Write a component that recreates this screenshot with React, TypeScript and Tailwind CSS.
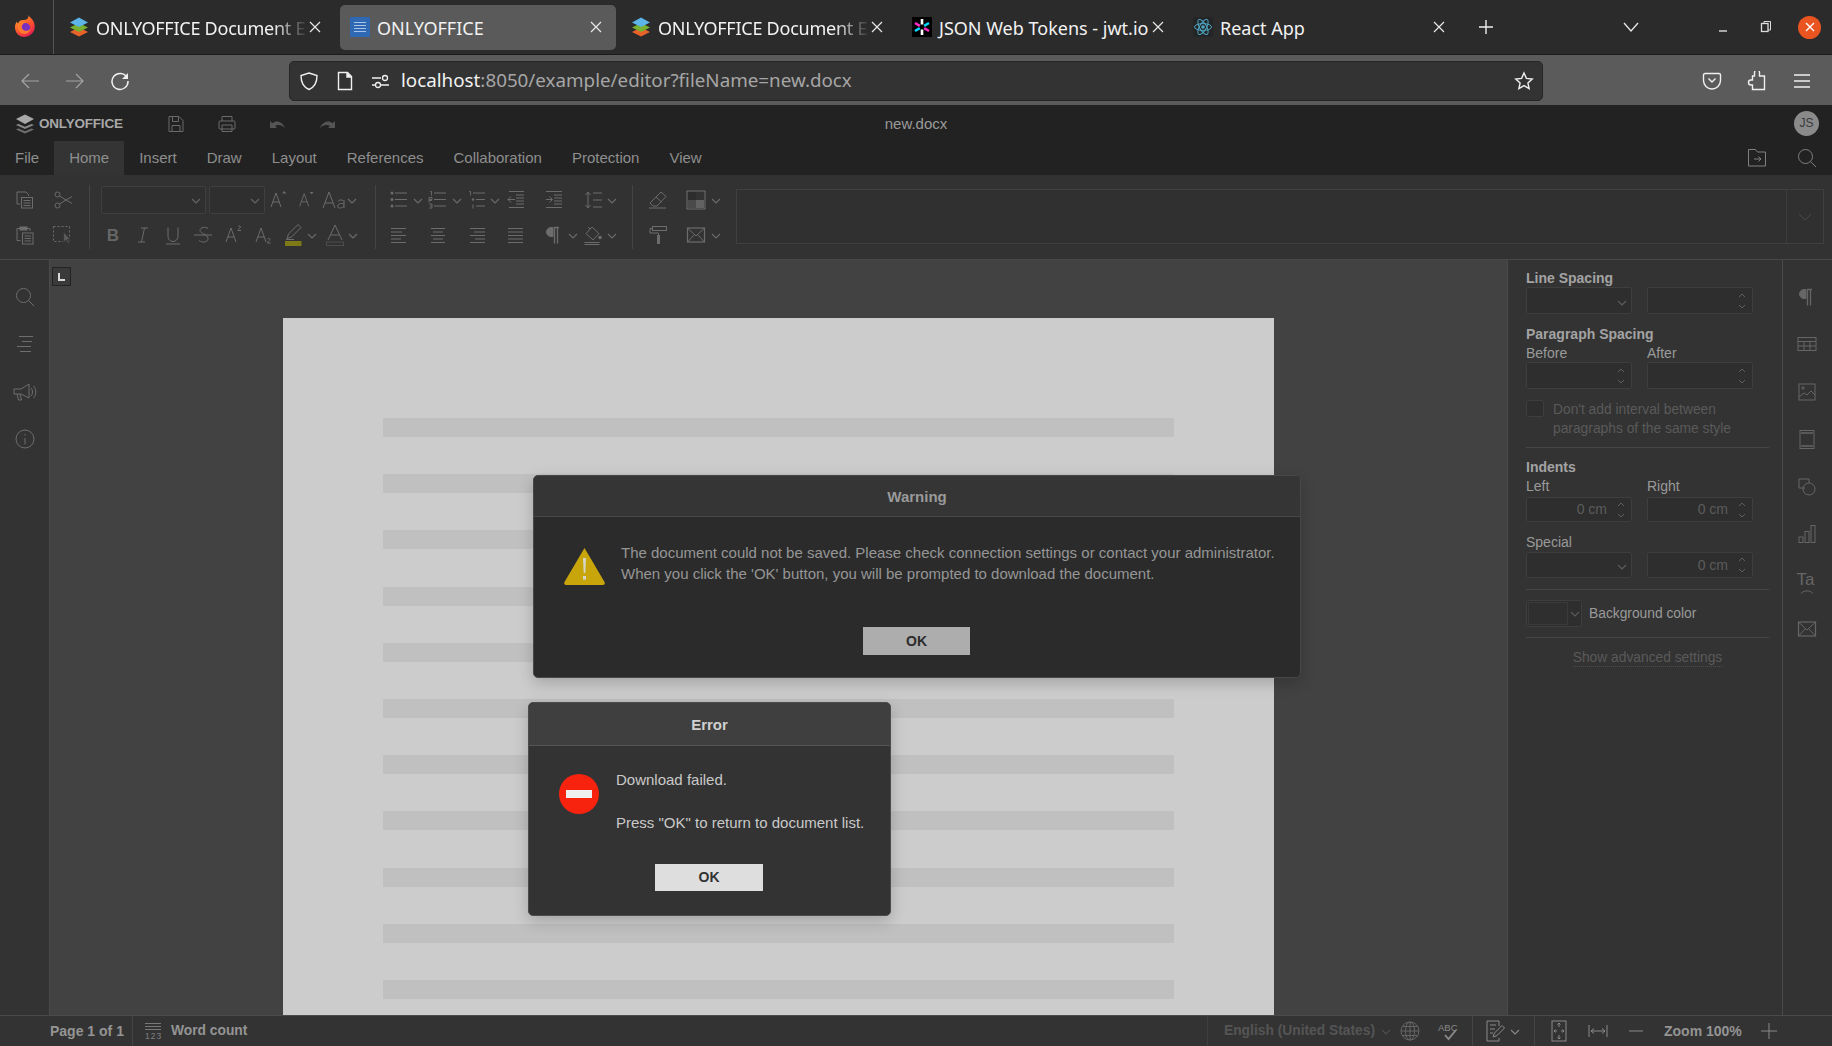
import React from "react";

type IP = { w?: number; h?: number; vb?: string; className?: string; sw?: number; children?: React.ReactNode };
const Ic = ({ w = 20, h = 20, vb, className = "", sw = 1, children }: IP) => (
  <svg width={w} height={h} viewBox={vb ?? `0 0 ${w} ${h}`} fill="none" stroke="currentColor" strokeWidth={sw} className={`block shrink-0 ${className}`}>
    {children}
  </svg>
);
const Chev = ({ className = "" }: { className?: string }) => (
  <div className={`flex w-[10px] shrink-0 justify-center pt-[1px] ${className}`}>
    <svg width="10" height="6" viewBox="0 0 10 6" fill="none" stroke="currentColor" strokeWidth="1.1" className="block"><path d="M1 1l4 4 4-4" /></svg>
  </div>
);
const Stack = ({ size = 20 }: { size?: number }) => (
  <svg width={size} height={size} viewBox="0 0 20 20" className="block shrink-0">
    <path d="M10 10.500L1 15l9 4.500 9-4.500z" fill="#e8632a" />
    <path d="M10 6L1 10.500l9 4.500 9-4.500z" fill="#78b02f" />
    <path d="M10 .5L1 5.500l9 4.500 9-4.500z" fill="#5cb4e8" />
  </svg>
);
const Firefox = () => (
  <svg width="22" height="24" viewBox="0 0 22 24" className="block">
    <defs>
      <linearGradient id="ff" x1="0" y1="0" x2="0.6" y2="1"><stop offset="0" stopColor="#ffb52e" /><stop offset="0.55" stopColor="#ff5a2c" /><stop offset="1" stopColor="#e8214f" /></linearGradient>
    </defs>
    <path d="M14.500 1c.8 2.500 3.800 3.400 5.300 7 1.600 4 1.200 7.600-1 10.600-2.100 2.800-5 4.400-8.300 4.400C5 23 1 18.500 1 13.500c0-2.700.8-4.600 1.900-6 .2 1 .6 1.700 1.200 2.200C5 6.800 7 5.800 9.500 6c2.500-.2 5.500-1 5-5z" fill="url(#ff)" />
    <circle cx="11" cy="14" r="5.200" fill="#7a2fc0" />
    <path d="M3.500 10c2-2.500 6-3.200 9-1.500-2.500.2-4.500 1.800-4.700 4-.2 2.500 2 4.500 4.700 4.300 2-.2 3.300-1.300 4-2.800-.3 3.800-3 6-6 6-3.800 0-7-3.500-7-7 0-1 0-2 0-3z" fill="#ff7a2c" />
  </svg>
);
const DocFav = () => (
  <svg width="20" height="20" viewBox="0 0 20 20" className="block shrink-0">
    <rect width="20" height="20" fill="#2f68b3" rx="1" />
    <path d="M4 5.500h12M4 8.500h12M4 11.500h12M4 14.500h12" stroke="#a9c4e8" strokeWidth="1.200" />
  </svg>
);
const JwtFav = () => (
  <svg width="20" height="20" viewBox="0 0 20 20" className="block shrink-0">
    <rect width="20" height="20" fill="#000" />
    <g strokeWidth="2.600">
      <path d="M10 7.500V2M10 12.500V18" stroke="#fff" />
      <path d="M12.200 8.800L17 6M7.800 11.200L3 14" stroke="#00d8ff" />
      <path d="M12.200 11.200L17 14M7.800 8.800L3 6" stroke="#ff2bc4" />
    </g>
  </svg>
);
const ReactFav = () => (
  <svg width="20" height="20" viewBox="0 0 20 20" className="block shrink-0">
    <rect width="20" height="20" fill="#232526" rx="2" />
    <g fill="none" stroke="#4ea8c4" strokeWidth="1">
      <ellipse cx="10" cy="10" rx="8.500" ry="3.400" />
      <ellipse cx="10" cy="10" rx="8.500" ry="3.400" transform="rotate(60 10 10)" />
      <ellipse cx="10" cy="10" rx="8.500" ry="3.400" transform="rotate(120 10 10)" />
    </g>
    <circle cx="10" cy="10" r="1.800" fill="#4ea8c4" />
  </svg>
);
const X = ({ className = "" }: { className?: string }) => (
  <svg width="16" height="16" viewBox="0 0 16 16" fill="none" stroke="currentColor" strokeWidth="1.200" className={`block shrink-0 ${className}`}><path d="M3 3l10 10M13 3L3 13" /></svg>
);

const Tab = ({ icon, title, active, fade }: { icon: React.ReactNode; title: string; active?: boolean; fade?: boolean }) => (
  <div className={`flex h-[45px] w-[276px] shrink-0 items-center rounded-[5px] pl-[10px] pr-[12px] ${active ? "bg-[#5a5a5a]" : ""}`}>
    {icon}
    <div className={`ml-[7px] min-w-0 flex-1 whitespace-nowrap pt-[3px] ${fade ? "tracking-[-0.25px] [mask-image:linear-gradient(90deg,#000_84%,rgba(0,0,0,0.15)_98%)]" : ""}`}>{title}</div>
    <X className="text-[#e8e8e8]" />
  </div>
);

const Combo = ({ className = "" }: { className?: string }) => (
  <div className={`flex items-center justify-end rounded-[2px] border border-[#3f3f3f] bg-[#2f2f2f] text-[#666666] ${className}`}>
    <Chev className="mr-[4px] mt-[1px]" />
  </div>
);
const Sep = () => <div className="mt-[10px] h-[64px] w-px shrink-0 bg-[#444444]" />;
const Row = ({ children }: { children: React.ReactNode }) => <div className="flex h-[24px] items-center">{children}</div>;

const Copy = () => <Ic><path d="M5 14H2V2h9l2.500 2.500V6" /><rect x="6.500" y="7.500" width="11" height="10.500" /><path d="M8.500 10.500h7M8.500 13h7M8.500 15.500h7" /></Ic>;
const Paste = () => <Ic><path d="M5.500 15.500H2V3.500h3M12 3.500h3V6" /><rect x="5" y="2" width="7" height="3" fill="currentColor" /><rect x="7.500" y="8" width="10.500" height="11" /><path d="M9.500 11h6.500M9.500 13.500h6.500M9.500 16h6.500" /></Ic>;
const Cut = () => <Ic><circle cx="4.500" cy="4.500" r="2.500" /><circle cx="4.500" cy="15.500" r="2.500" /><path d="M6.500 6L19 13.500M6.500 14L19 6.500" /></Ic>;
const SelectAll = () => <Ic><rect x="1.500" y="1.500" width="16" height="15" strokeDasharray="2 2" /><path d="M11.500 7l0 10 2.500-2 2 4 1.500-.8-2-3.700h3z" fill="#5a5a5a" stroke="#333333" strokeWidth="0.800" /></Ic>;
const BigA = ({ children }: { children?: React.ReactNode }) => <Ic><path d="M3 17L8 3l5 14M4.800 12h6.400" />{children}</Ic>;

const Bullets = () => <Ic><circle cx="3" cy="3" r="1.500" fill="currentColor" stroke="none" /><circle cx="3" cy="9.500" r="1.500" fill="currentColor" stroke="none" /><circle cx="3" cy="16" r="1.500" fill="currentColor" stroke="none" /><path d="M6 3h12M6 9.500h12M6 16h12" /></Ic>;
const Numbers = () => <Ic><path d="M6 3h12M6 9.500h12M6 16h12" /><path d="M2 1.500h1.500v4M1 12.500V7.500h3v2H1.500v1H4M1 14h3v4H1M2 16h2" strokeWidth="0.900" /></Ic>;
const Multi = () => <Ic><path d="M6 3h12M9 9.500h9M9 16h9" /><path d="M2 1.500h1.500v4" strokeWidth="0.900" /><circle cx="6" cy="9.500" r="1.200" fill="currentColor" stroke="none" /><path d="M6 14.500v4" /></Ic>;
const Outdent = () => <Ic><path d="M3 1.500h15M10 5h8M10 8h8M10 11h8M10 14h8M3 17.500h15M2 9.500h7M5 6.500l-3 3 3 3" /></Ic>;
const Indent = () => <Ic><path d="M2 1.500h16M10 5h8M10 8h8M10 11h8M10 14h8M2 17.500h16M2 9.500h6M5.500 6.500l3 3-3 3" /></Ic>;
const LineSp = () => <Ic><path d="M4 2v16M1.500 5L4 2l2.500 3M1.500 15L4 18l2.500-3M9 3h9M9 10h9M9 17h9" /></Ic>;
const AL = () => <Ic><path d="M2 3.500h15M2 7h11M2 10.500h15M2 14h10M2 17.500h15" /></Ic>;
const AC = () => <Ic><path d="M3 3.500h14M5 7h10M3 10.500h14M5 14h10M3 17.500h14" /></Ic>;
const AR = () => <Ic><path d="M3 3.500h15M7 7h11M3 10.500h15M8 14h10M3 17.500h15" /></Ic>;
const AJ = () => <Ic><path d="M2 3.500h15M2 7h15M2 10.500h15M2 14h15M2 17.500h15" /></Ic>;
const Pilcrow = () => <Ic><path d="M9 2.500H7a4.500 4.500 0 000 9h2z" fill="currentColor" /><path d="M10 2.500h5M10.500 2.500v16M13.500 2.500v16" strokeWidth="1.300" /></Ic>;
const Fill = () => <Ic><path d="M9 2l7 6.500-6 6.500-7-6.500zM7 4L5 2" /><circle cx="17" cy="12.500" r="1.800" fill="currentColor" stroke="none" /><path d="M1.500 17.500h15M1.500 19.500h15" /></Ic>;
const Eraser = () => <Ic><path d="M13 2l5 4.500-9 9.500H5L2 13z M8 7l5.500 5M1 18h17" /></Ic>;
const Scheme = () => <svg width="20" height="20" viewBox="0 0 20 20" className="block shrink-0"><rect x="1" y="1" width="18" height="18" fill="none" stroke="#6e6e6e" /><rect x="2" y="2" width="8" height="8" fill="#2d2d2d" /><rect x="10" y="2" width="8" height="8" fill="#333333" /><rect x="2" y="10" width="8" height="8" fill="#4a4a4a" /><rect x="10" y="10" width="8" height="8" fill="#626262" /></svg>;
const Paint = () => <Ic><rect x="4.500" y="1.500" width="14" height="4" /><path d="M4.500 3.500H2v4.500h8.500v2.500" /><rect x="9" y="10" width="3" height="9" fill="currentColor" stroke="none" /></Ic>;
const Mail = () => <Ic><rect x="1.500" y="3" width="17" height="14" strokeWidth="1.200" /><path d="M2 3.500l8 7.500 8-7.500M2 16.500l6.500-7M18 16.500l-6.500-7" /></Ic>;
const Save = () => <Ic><path d="M3 2.500h10l4 4v11H3z" /><path d="M6.500 2.500v5h6v-5M6 17.500v-6h8v6" /></Ic>;
const Print = () => <Ic><rect x="2" y="7" width="16" height="8" rx="1" /><path d="M5 7V2.500h10V7M5 11h10v6.500H5z" /></Ic>;
const Undo = () => <svg width="20" height="20" viewBox="0 0 20 20" className="block shrink-0"><path d="M3 14V7l2.300 2.300C9.500 5.800 15.500 7.500 18 14c-3-3.300-7.500-4-10-2l2 2z" fill="currentColor" /></svg>;
const Redo = () => <svg width="20" height="20" viewBox="0 0 20 20" className="block shrink-0"><path d="M17 14V7l-2.300 2.300C10.500 5.800 4.500 7.500 2 14c3-3.300 7.500-4 10-2l-2 2z" fill="currentColor" /></svg>;
const Search = () => <Ic><circle cx="8.500" cy="8.500" r="7" /><path d="M13.500 13.500l5.500 5.500" /></Ic>;

const Spin = () => (
  <div className="mr-[5px] flex w-[10px] shrink-0 flex-col items-center gap-[6px]">
    <svg width="10" height="6" viewBox="0 0 10 6" fill="none" stroke="currentColor" className="block"><path d="M2 5l3-3 3 3" /></svg>
    <svg width="10" height="6" viewBox="0 0 10 6" fill="none" stroke="currentColor" className="block"><path d="M2 1l3 3 3-3" /></svg>
  </div>
);
const Field = ({ value, h, w = "w-[106px]" }: { value?: string; h: string; w?: string }) => (
  <div className={`flex items-center justify-end rounded-[2px] border border-[#3e3e3e] bg-[#2e2e2e] text-[#5f5f5f] ${h} ${w}`}>
    {value && <span className="mr-[9px] text-[14px] text-[#5c5c5c]">{value}</span>}
    <Spin />
  </div>
);
const PCombo = ({ h }: { h: string }) => (
  <div className={`flex w-[106px] items-center justify-end rounded-[2px] border border-[#3e3e3e] bg-[#2e2e2e] text-[#5f5f5f] ${h}`}>
    <Chev className="mr-[4px] mt-[3px]" />
  </div>
);
const Label = ({ children, bold, className = "" }: { children: React.ReactNode; bold?: boolean; className?: string }) => (
  <div className={`h-[18px] text-[14px] leading-[18px] ${bold ? "font-bold text-[#a3a3a3]" : "text-[#9a9a9a]"} ${className}`}>{children}</div>
);
const Divider = ({ className = "" }: { className?: string }) => <div className={`h-px w-[243px] bg-[#464646] ${className}`} />;

const LINES = Array.from({ length: 11 });

export default function App() {
  return (
    <div className="relative flex h-[1046px] w-[1832px] flex-col overflow-hidden bg-[#333333] font-['Liberation_Sans',Arial,sans-serif]">
      {/* Browser tab strip */}
      <div className="flex h-[55px] shrink-0 items-center border-b border-[#1b1b1b] bg-[#2b2b2b] font-['Noto_Sans',sans-serif] text-[18px] text-[#f2f2f2]">
        <div className="flex h-full w-[54px] shrink-0 items-center justify-center border-r border-[#555555] pb-[2px] pr-[4px]"><Firefox /></div>
        <div className="ml-[5px] flex gap-[5px]">
          <Tab icon={<Stack />} title="ONLYOFFICE Document E" fade />
          <Tab icon={<DocFav />} title="ONLYOFFICE" active />
          <Tab icon={<Stack />} title="ONLYOFFICE Document E" fade />
          <Tab icon={<JwtFav />} title="JSON Web Tokens - jwt.io" />
          <Tab icon={<ReactFav />} title="React App" />
        </div>
        <Ic w={16} h={16} sw={1.400} className="ml-[19px] text-[#eeeeee]"><path d="M8 1v14M1 8h14" /></Ic>
        <Ic w={16} h={16} sw={1.300} className="ml-[129px] text-[#e8e8e8]"><path d="M1 4l7 8 7-8" /></Ic>
        <Ic w={16} h={16} sw={1.400} className="ml-[76px] text-[#dddddd]"><path d="M4 12h8" /></Ic>
        <Ic w={16} h={16} className="ml-[27px] text-[#dddddd]"><path d="M6 4V2.500h6.500V11H10" /><rect x="3.500" y="4.500" width="6.500" height="8" fill="#2b2b2b" strokeWidth="1.300" /></Ic>
        <div className="ml-[24px] flex h-[23px] w-[23px] shrink-0 items-center justify-center rounded-full bg-[#e95420] text-white">
          <svg width="12" height="12" viewBox="0 0 12 12" fill="none" stroke="currentColor" strokeWidth="1.400" className="block"><path d="M2 2l8 8M10 2l-8 8" /></svg>
        </div>
      </div>

      {/* Browser nav bar */}
      <div className="flex h-[50px] shrink-0 items-center bg-[#5b5b5b] pt-[1px]">
        <Ic sw={1.200} className="ml-[20px] text-[#a4a4a4]"><path d="M19 10H2M9 3l-7 7 7 7" /></Ic>
        <Ic sw={1.200} className="ml-[25px] text-[#a4a4a4]"><path d="M1 10h17M11 3l7 7-7 7" /></Ic>
        <Ic sw={1.500} className="ml-[25px] text-[#f0f0f0]"><path d="M17 6.500A8 8 0 1018 10" /><path d="M18 2v6h-6z" fill="currentColor" stroke="none" /></Ic>
        <div className="ml-[159px] flex h-[40px] w-[1254px] shrink-0 items-center rounded-[5px] border border-[#262626] bg-[#333333] pl-[9px] pr-[8px] text-[#f0f0f0]">
          <Ic sw={1.400}><path d="M10 2l8 2.500c0 7-2 11.500-8 14-6-2.500-8-7-8-14z" /></Ic>
          <Ic sw={1.400} className="ml-[16px]"><path d="M3.500 1.500h9l4 4v13h-13z" /><path d="M12 1.500v4.500h4.500" fill="currentColor" /></Ic>
          <Ic sw={1.300} className="ml-[15px]"><path d="M2 7h9M2 14h4M11 14h8" /><circle cx="15" cy="7" r="2.500" /><circle cx="8" cy="14" r="2.500" /></Ic>
          <div className="ml-[11px] whitespace-nowrap font-['Noto_Sans',sans-serif] text-[18.800px]"><span className="text-[#f2f2f2]">localhost</span><span className="text-[#a6a6a6]">:8050/example/editor?fileName=new.docx</span></div>
          <Ic sw={1.400} className="ml-auto"><path d="M10 2l2.400 5.400 5.800.6-4.300 3.900 1.200 5.700-5.100-3-5.100 3 1.200-5.700L1.800 8l5.800-.6z" /></Ic>
        </div>
        <Ic sw={1.400} className="ml-[159px] text-[#f0f0f0]"><path d="M3 2.500h14A1.500 1.500 0 0118.500 4v5.500a8.500 8.500 0 01-17 0V4A1.500 1.500 0 013 2.500z" /><path d="M6.500 7.500L10 11l3.500-3.500" /></Ic>
        <Ic sw={1.400} className="ml-[25px] text-[#f0f0f0]"><path d="M7.500 1.500a2.500 2.500 0 015 0V5h5v13.500h-12V14H4a2.500 2.500 0 010-5h1.500V5h2z" /></Ic>
        <Ic sw={1.500} className="ml-[25px] text-[#f0f0f0]"><path d="M2 4h16M2 10h16M2 16h16" /></Ic>
      </div>

      {/* Editor header */}
      <div className="flex h-[70px] shrink-0 flex-col bg-[#222222]">
        <div className="grid h-[36px] grid-cols-[1fr_auto_1fr] items-center">
          <div className="flex items-center pl-[15px] pt-[2px] text-[#6a6a6a]">
            <svg width="20" height="20" viewBox="0 0 20 20" className="block shrink-0">
              <path d="M10 11.500L1 15.500l9 4 9-4-2.500-1L10 17.200 3.500 14.500z" fill="#6f6f6f" />
              <path d="M10 7L1 11l9 4 9-4-2.500-1L10 12.800 3.500 10z" fill="#8a8a8a" />
              <path d="M10 .5L1 5l9 5 9-5z" fill="#a9a9a9" />
            </svg>
            <span className="ml-[4px] w-[83px] whitespace-nowrap text-[13.500px] font-bold tracking-[-0.2px] text-[#a8a8a8]">ONLYOFFICE</span>
            <div className="ml-[44px]"><Save /></div>
            <div className="ml-[31px]"><Print /></div>
            <div className="ml-[30px] text-[#555555]"><Undo /></div>
            <div className="ml-[31px] text-[#555555]"><Redo /></div>
          </div>
          <div className="pt-[2px] text-[15px] text-[#9a9a9a]">new.docx</div>
          <div className="flex justify-end pr-[13px]">
            <div className="flex h-[25px] w-[25px] items-center justify-center rounded-full bg-[#8a8a8a] text-[12px] text-[#3a3a3a]">JS</div>
          </div>
        </div>
        <div className="flex h-[34px] items-stretch text-[15px] text-[#8e8e8e]">
          {["File", "Home", "Insert", "Draw", "Layout", "References", "Collaboration", "Protection", "View"].map((m) => (
            <div key={m} className={`flex items-center px-[15px] ${m === "Home" ? "bg-[#343434]" : ""}`}>{m}</div>
          ))}
          <div className="ml-auto flex items-center pr-[15px] text-[#808080]">
            <Ic><path d="M1.500 1.500h7l2 2.500h8v14h-17z" /><path d="M7 11h7M11.500 8.500L14 11l-2.500 2.500" /></Ic>
            <div className="ml-[30px]"><Search /></div>
          </div>
        </div>
      </div>

      {/* Toolbar */}
      <div className="flex h-[85px] shrink-0 items-start border-b border-[#484848] bg-[#323232] text-[#6c6c6c]">
        <div className="flex w-[89px] shrink-0 flex-col gap-[11px] pt-[13px]">
          <Row><div className="ml-[15px]"><Copy /></div><div className="ml-[18px]"><Cut /></div></Row>
          <Row><div className="ml-[15px]"><Paste /></div><div className="ml-[17px]"><SelectAll /></div></Row>
        </div>
        <Sep />
        <div className="flex w-[285px] shrink-0 flex-col gap-[11px] pt-[13px]">
          <Row>
            <Combo className="ml-[11px] h-[28px] w-[105px]" />
            <Combo className="ml-[3px] h-[28px] w-[56px]" />
            <div className="ml-[3px]"><BigA><path d="M14 3.500l2.200-2.500 2.200 2.500z" fill="currentColor" stroke="none" /></BigA></div>
            <div className="ml-[8px] scale-90"><BigA><path d="M14 1l2.200 2.500L18.400 1z" fill="currentColor" stroke="none" /></BigA></div>
            <div className="ml-[6px]"><Ic w={24} h={20}><path d="M1 18L7 2l6 16M3 13h8" /><path d="M21.500 11c-1-1.500-5-1.500-5.500.5M22 10v8M22 14c-2-.8-6-.8-6.300 2 0 3 5 2.500 6.300 0" /></Ic></div>
            <Chev className="ml-[1px]" />
          </Row>
          <Row>
            <div className="ml-[13px] flex w-[20px] justify-center text-[17px] font-bold leading-none text-[#666666]">B</div>
            <div className="ml-[10px]"><Ic><path d="M8 3h7M5 17h7M11.500 3L8.500 17" /></Ic></div>
            <div className="ml-[10px]"><Ic><path d="M5 2.500v9a5 5 0 0010 0v-9M3 19h14" /></Ic></div>
            <div className="ml-[10px]"><Ic><path d="M15 3.500C13 1.500 7 2 7 5.500c0 3 8 4 8 8 0 4-6 4.500-9 2M1 10h18" /></Ic></div>
            <div className="ml-[10px]"><BigA><path d="M15 1.500c1-1 2.500-.5 2.500.5 0 1-2.500 2-2.500 3.500h3" /></BigA></div>
            <div className="ml-[10px]"><BigA><path d="M14.500 14c1-1 2.500-.5 2.500.5s-2.500 2-2.500 3.500h3" /></BigA></div>
            <div className="ml-[10px]"><Ic h={24} vb="0 0 20 24"><path d="M15 1.500l3 3L8.500 14l-4.500 1.500 1.500-4.500zM3 16.500h8" /><rect x="2" y="18" width="16.500" height="5" fill="#7f7a18" stroke="none" /></Ic></div>
            <Chev className="ml-[4px]" />
            <div className="ml-[8px]"><Ic h={24} vb="0 0 20 24"><path d="M3 17L10 2l7 15M5.500 12h9" /><rect x="1.500" y="19" width="17" height="3.500" stroke="#4c4c4c" /></Ic></div>
            <Chev className="ml-[3px]" />
          </Row>
        </div>
        <Sep />
        <div className="flex w-[256px] shrink-0 flex-col gap-[11px] pt-[13px]">
          <Row>
            <div className="ml-[13px]"><Bullets /></div><Chev className="ml-[4px]" />
            <div className="ml-[5px]"><Numbers /></div><Chev className="ml-[4px]" />
            <div className="ml-[5px]"><Multi /></div><Chev className="ml-[3px]" />
            <div className="ml-[6px]"><Outdent /></div>
            <div className="ml-[18px]"><Indent /></div>
            <div className="ml-[20px]"><LineSp /></div><Chev className="ml-[3px]" />
          </Row>
          <Row>
            <div className="ml-[13px]"><AL /></div>
            <div className="ml-[19px]"><AC /></div>
            <div className="ml-[19px]"><AR /></div>
            <div className="ml-[19px]"><AJ /></div>
            <div className="ml-[18px]"><Pilcrow /></div><Chev className="ml-[4px]" />
            <div className="ml-[5px]"><Fill /></div><Chev className="ml-[4px]" />
          </Row>
        </div>
        <Sep />
        <div className="flex w-[103px] shrink-0 flex-col gap-[11px] pt-[13px]">
          <Row><div className="ml-[15px]"><Eraser /></div><div className="ml-[18px]"><Scheme /></div><Chev className="ml-[5px]" /></Row>
          <Row><div className="ml-[15px]"><Paint /></div><div className="ml-[18px]"><Mail /></div><Chev className="ml-[5px]" /></Row>
        </div>
        <div className="mt-[14px] flex h-[55px] w-[1088px] shrink-0 justify-end border border-[#404040] bg-[#303030]">
          <div className="flex w-[37px] items-center justify-center border-l border-[#3c3c3c] text-[#484848]"><svg width="14" height="8" viewBox="0 0 14 8" fill="none" stroke="currentColor" className="block"><path d="M1 1l6 6 6-6" /></svg></div>
        </div>
      </div>

      {/* Workspace */}
      <div className="flex min-h-0 flex-1">
        <div className="flex w-[50px] shrink-0 flex-col items-center gap-[27.400px] border-r border-[#4a4a4a] bg-[#333333] pt-[27px] text-[#6e6e6e]">
          <Search />
          <Ic><path d="M4 2.500h14M7 7.500h10M2 12.500h14M5 17.500h11" /></Ic>
          <Ic w={24} h={20}><path d="M1 7h7l8-5v14l-8-4H1zM4 12l1.500 6h3L7 12M18 6c2 2 2 6 0 8M20.500 4c3 3 3 9 0 12" /></Ic>
          <Ic><circle cx="10" cy="10" r="9" /><path d="M10 5v1.500M10 9v6.500" /></Ic>
        </div>
        <div className="relative min-w-0 flex-1 overflow-hidden bg-[#424242]">
          <div className="absolute left-[2px] top-[7px] flex h-[19px] w-[19px] items-center justify-center border border-[#232323] bg-[#3a3a3a]">
            <svg width="9" height="9" viewBox="0 0 9 9" className="block"><path d="M1 1h2v6h5v2H1z" fill="#d8d8d8" /></svg>
          </div>
          <div className="ml-[233px] mt-[58px] flex h-[900px] w-[991px] flex-col gap-[37.200px] bg-[#cccccc] pl-[100px] pt-[100px]">
            {LINES.map((_, i) => <div key={i} className="h-[19px] w-[791px] shrink-0 bg-[#c0c0c0]" />)}
          </div>
        </div>

        {/* Right settings panel */}
        <div className="w-[275px] shrink-0 border-l border-[#4a4a4a] bg-[#333333] pl-[18px] pt-[9px]">
          <Label bold>Line Spacing</Label>
          <div className="flex gap-[15px]"><PCombo h="h-[27px]" /><Field h="h-[27px]" /></div>
          <Label bold className="mt-[11px]">Paragraph Spacing</Label>
          <div className="mt-[1px] flex gap-[15px]"><Label className="w-[106px]">Before</Label><Label>After</Label></div>
          <div className="flex gap-[15px]"><Field h="h-[27px]" /><Field h="h-[27px]" /></div>
          <div className="mt-[11px] flex h-[38px]">
            <div className="h-[17px] w-[18px] rounded-[2px] border border-[#3e3e3e] bg-[#2e2e2e]" />
            <div className="ml-[9px] text-[13.800px] leading-[19px] text-[#5a5a5a]">Don't add interval between<br />paragraphs of the same style</div>
          </div>
          <Divider className="mt-[9px]" />
          <Label bold className="mt-[10px]">Indents</Label>
          <div className="mt-[1px] flex gap-[15px]"><Label className="w-[106px]">Left</Label><Label>Right</Label></div>
          <div className="mt-[2px] flex gap-[15px]"><Field h="h-[25px]" value="0 cm" /><Field h="h-[25px]" value="0 cm" /></div>
          <Label className="mt-[11px]">Special</Label>
          <div className="mt-[1px] flex gap-[15px]"><PCombo h="h-[26px]" /><Field h="h-[26px]" value="0 cm" /></div>
          <Divider className="mt-[11px]" />
          <div className="mt-[10px] flex h-[27px] items-center">
            <div className="flex h-[27px] w-[56px] items-center rounded-[2px] border border-[#3e3e3e] bg-[#2e2e2e] pl-[1px] text-[#5a5a5a]">
              <div className="h-[23px] w-[40px] border border-[#3a3a3a] bg-[#2f2f2f]" />
              <Chev className="ml-[2px]" />
            </div>
            <div className="ml-[7px] pt-[2px] text-[13.800px] text-[#9a9a9a]">Background color</div>
          </div>
          <Divider className="mt-[10px]" />
          <div className="mt-[11px] flex w-[243px] justify-center">
            <span className="h-[18px] border-b border-dotted border-[#4c4c4c] text-[13.800px] leading-[18px] text-[#5a5a5a]">Show advanced settings</span>
          </div>
        </div>

        {/* Right rail */}
        <div className="flex w-[50px] shrink-0 flex-col items-center gap-[27.400px] border-l border-[#4a4a4a] bg-[#333333] pr-[2px] pt-[27px] text-[#666666]">
          <Pilcrow />
          <Ic><rect x="1" y="3.500" width="18" height="13" /><path d="M1 7.500h18M1 12h18M7 7.500v9M13 7.500v9" /></Ic>
          <Ic><rect x="2" y="2" width="16" height="16" /><circle cx="6" cy="6" r="1.200" /><path d="M2 15l5-4 3 2 4-4 4 4" /></Ic>
          <Ic><rect x="3" y="1.500" width="14" height="18" /><path d="M4 4h12M4 17h12" strokeWidth="1.500" /></Ic>
          <Ic><path d="M8 11H2V2h10v4" /><circle cx="12" cy="12" r="6" /></Ic>
          <Ic><rect x="2" y="13" width="4" height="5.500" /><rect x="8" y="7.500" width="4" height="11" /><rect x="14" y="1.500" width="4" height="17" /></Ic>
          <div className="relative h-[20px] w-[20px] text-[17px] leading-[17px] text-[#666666]">Ta
            <svg width="14" height="5" viewBox="0 0 14 5" fill="none" stroke="currentColor" className="absolute left-[3px] top-[18px] block"><path d="M1 4.500C4 1 10 1 13 4.500" /></svg>
          </div>
          <Mail />
        </div>
      </div>

      {/* Status bar */}
      <div className="flex h-[31px] shrink-0 items-center border-t border-[#4a4a4a] bg-[#333333] text-[14px] font-bold text-[#949494]">
        <span className="ml-[50px] w-[82px] whitespace-nowrap">Page 1 of 1</span>
        <div className="h-full w-px bg-[#454545]" />
        <svg width="16" height="18" viewBox="0 0 16 18" fill="none" stroke="currentColor" className="ml-[12px] block overflow-visible text-[#808080]">
          <path d="M0 1.500h16M0 4.500h16M0 7.500h16" strokeWidth="0.900" />
          <text x="0" y="16.500" fontSize="8.500" stroke="none" fill="currentColor" fontWeight="400" letterSpacing="1">123</text>
        </svg>
        <span className="ml-[10px] text-[13.800px]">Word count</span>
        <div className="ml-auto flex h-full items-center pr-[55px] text-[#6e6e6e]">
          <div className="h-full w-px bg-[#3e3e3e]" />
          <span className="ml-[16px] whitespace-nowrap text-[13.800px] text-[#555555]">English (United States)</span>
          <Chev className="ml-[6px] text-[#505050]" />
          <div className="ml-[9px] text-[#666666]"><Ic><circle cx="10" cy="10" r="9" /><ellipse cx="10" cy="10" rx="4.500" ry="9" /><path d="M1 10h18M2.500 5.500h15M2.500 14.500h15M10 1v18" /></Ic></div>
          <div className="ml-[18px] flex w-[20px] flex-col items-center text-[#8a8a8a]">
            <svg width="20" height="18" viewBox="0 0 20 18" fill="none" stroke="currentColor" className="block overflow-visible">
              <text x="0" y="9" fontSize="9.500" stroke="none" fill="currentColor" fontWeight="400">ABC</text>
              <path d="M7 13l3.500 4L18 8" strokeWidth="1.800" />
            </svg>
          </div>
          <div className="ml-[14px] h-full w-px bg-[#454545]" />
          <div className="ml-[13px] text-[#8a8a8a]"><Ic h={22} vb="0 0 20 22"><path d="M13 6V1H1v20h12v-3" /><path d="M4 5h6M4 9h5M4 13h3M7 17l1.500-4L16 5.500l2.500 2.500L11 15.500z" /></Ic></div>
          <Chev className="ml-[4px] text-[#8a8a8a]" />
          <div className="ml-[14px] h-full w-px bg-[#454545]" />
          <div className="ml-[16px] text-[#8a8a8a]"><Ic w={16} h={22}><rect x="1" y="1" width="14" height="20" /><path d="M8 3v4M6.500 4.500L8 3l1.500 1.500M8 15v4M6.500 17.500L8 19l1.500-1.500M3 11h3M4.500 9.500L3 11l1.500 1.500M10 11h3M11.500 9.500L13 11l-1.500 1.500" /></Ic></div>
          <div className="ml-[21px] text-[#8a8a8a]"><Ic><path d="M1 4v12M19 4v12M3 10h14M6 7.500L3 10l3 2.500M14 7.500l3 2.500-3 2.500" /></Ic></div>
          <div className="ml-[21px] text-[#8a8a8a]"><Ic w={14} h={14}><path d="M0 7h14" /></Ic></div>
          <span className="ml-[21px] w-[78px] whitespace-nowrap text-[#949494]">Zoom 100%</span>
          <div className="ml-[19px] text-[#8a8a8a]"><Ic w={16} h={16}><path d="M8 0v16M0 8h16" /></Ic></div>
        </div>
      </div>

      {/* Warning dialog */}
      <div className="absolute left-[533px] top-[475px] flex h-[203px] w-[768px] flex-col overflow-hidden rounded-[5px] border border-[#484848] bg-[#2b2b2b] shadow-[0_5px_15px_rgba(0,0,0,0.2)]">
        <div className="flex h-[41px] shrink-0 items-center justify-center border-b border-[#484848] bg-[#353535] pt-[3px] text-[15px] font-bold text-[#9a9a9a]">Warning</div>
        <div className="flex pl-[29px] pt-[25px]">
          <svg width="43" height="38" viewBox="0 0 42 38" className="mt-[5px] block shrink-0">
            <path d="M21 1L41 35c.800 1.500 0 3-1.500 3h-37C1 38 .200 36.500 1 35z" fill="#c9a50c" />
            <path d="M19.500 11h3l-.7 15h-1.600z" fill="#d6d6c8" />
            <rect x="19.500" y="29" width="3" height="3.600" fill="#d6d6c8" />
          </svg>
          <div className="ml-[15px] whitespace-nowrap text-[15px] leading-[21px] text-[#969696]">
            The document could not be saved. Please check connection settings or contact your administrator.<br />
            When you click the 'OK' button, you will be prompted to download the document.
          </div>
        </div>
        <div className="mt-[42px] flex justify-center pr-[1px]">
          <div className="flex h-[28px] w-[107px] items-center justify-center bg-[#adadad] text-[14px] font-bold text-[#2b2b2b]">OK</div>
        </div>
      </div>

      {/* Error dialog */}
      <div className="absolute left-[528px] top-[702px] flex h-[214px] w-[363px] flex-col overflow-hidden rounded-[5px] border border-[#4c4c4c] bg-[#333333] shadow-[0_5px_15px_rgba(0,0,0,0.2)]">
        <div className="flex h-[43px] shrink-0 items-center justify-center border-b border-[#555555] bg-[#3f3f3f] pt-[2px] text-[15px] font-bold text-[#d0d0d0]">Error</div>
        <div className="flex pl-[30px] pt-[23px]">
          <div className="mt-[5px] flex h-[40px] w-[40px] shrink-0 items-center justify-center rounded-full bg-[#f7230f]">
            <div className="h-[8px] w-[26px] bg-[#f0f0f0]" />
          </div>
          <div className="ml-[17px] text-[15px] leading-[21px] text-[#c9c9c9]">
            <div>Download failed.</div>
            <div className="mt-[22px] whitespace-nowrap">Press "OK" to return to document list.</div>
          </div>
        </div>
        <div className="mt-[31px] flex justify-center pr-[1px]">
          <div className="flex h-[27px] w-[108px] items-center justify-center bg-[#dedede] text-[14px] font-bold text-[#333333]">OK</div>
        </div>
      </div>
    </div>
  );
}
